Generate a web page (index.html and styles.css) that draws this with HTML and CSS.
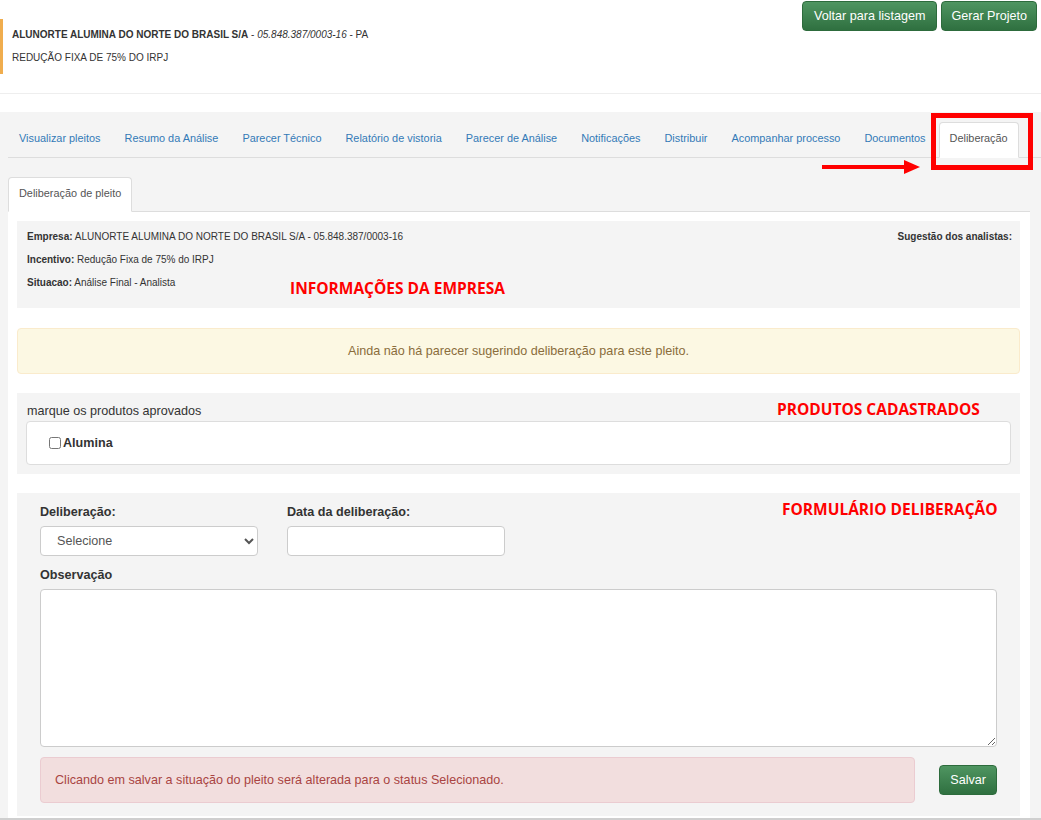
FILE: index.html
```html
<!DOCTYPE html>
<html lang="pt-BR">
<head>
    <meta charset="UTF-8">
    <meta name="viewport" content="width=device-width, initial-scale=1.0">
    <title>Deliberação de pleito</title>
    <link rel="stylesheet" href="styles.css">
</head>
<body>
    <div class="top">
        <div class="pleito-info">
            <p><b>ALUNORTE ALUMINA DO NORTE DO BRASIL S/A</b> - <i>05.848.387/0003-16</i> - PA</p>
            <p>REDUÇÃO FIXA DE 75% DO IRPJ</p>
        </div>
        <div class="actions">
            <button class="btn-green btn-back" type="button">Voltar para listagem</button>
            <button class="btn-green btn-project" type="button">Gerar Projeto</button>
        </div>
    </div>

    <div class="workspace">
        <ul class="nav main-nav">
            <li><a href="#">Visualizar pleitos</a></li>
            <li><a href="#">Resumo da Análise</a></li>
            <li><a href="#">Parecer Técnico</a></li>
            <li><a href="#">Relatório de vistoria</a></li>
            <li><a href="#">Parecer de Análise</a></li>
            <li><a href="#">Notificações</a></li>
            <li><a href="#">Distribuir</a></li>
            <li><a href="#">Acompanhar processo</a></li>
            <li><a href="#">Documentos</a></li>
            <li class="active"><a href="#">Deliberação</a></li>
        </ul>

        <!-- marcação vermelha da captura -->
        <div class="mark-box"></div>
        <div class="mark-arrow"><span class="shaft"></span><span class="head"></span></div>

        <div class="tab-content">
            <ul class="nav sub-nav">
                <li class="active"><a href="#">Deliberação de pleito</a></li>
            </ul>

            <div class="pane">
                <div class="box info-box">
                    <div class="info-cols">
                        <div>
                            <p><b>Empresa:</b> ALUNORTE ALUMINA DO NORTE DO BRASIL S/A - 05.848.387/0003-16</p>
                            <p><b>Incentivo:</b> Redução Fixa de 75% do IRPJ</p>
                            <p><b>Situacao:</b> Análise Final - Analista</p>
                        </div>
                        <p><b>Sugestão dos analistas:</b></p>
                    </div>
                    <span class="note note-info">INFORMAÇÕES DA EMPRESA</span>
                </div>

                <div class="alert alert-warning">Ainda não há parecer sugerindo deliberação para este pleito.</div>

                <div class="box products-box">
                    <p class="products-label">marque os produtos aprovados</p>
                    <div class="products-list">
                        <label class="check"><input type="checkbox"> Alumina</label>
                    </div>
                    <span class="note note-products">PRODUTOS CADASTRADOS</span>
                </div>

                <form class="box form-box">
                    <div class="form-row">
                        <div class="form-group">
                            <label class="form-label" for="deliberacao">Deliberação:</label>
                            <select class="form-input" id="deliberacao">
                                <option>Selecione</option>
                            </select>
                        </div>
                        <div class="form-group">
                            <label class="form-label" for="data">Data da deliberação:</label>
                            <input class="form-input" type="text" id="data">
                        </div>
                    </div>
                    <label class="form-label obs-label" for="obs">Observação</label>
                    <textarea class="form-input obs" id="obs"></textarea>
                    <div class="submit-row">
                        <div class="alert alert-danger">Clicando em salvar a situação do pleito será alterada para o status Selecionado.</div>
                        <button class="btn-green btn-save" type="submit">Salvar</button>
                    </div>
                    <span class="note note-form">FORMULÁRIO DELIBERAÇÃO</span>
                </form>
            </div>
        </div>
    </div>
</body>
</html>
```

FILE: styles.css
```css
* {
    box-sizing: border-box;
}

body {
    margin: 0;
    background-color: #fff;
    font-family: "Liberation Sans", Arial, sans-serif;
    font-size: 12.6px;
    color: #333;
}

p {
    margin: 0;
}

.top {
    display: flex;
    justify-content: space-between;
    align-items: flex-start;
    height: 94px;
    border-bottom: 1px solid #eee;
}

.pleito-info {
    margin-top: 19px;
    height: 55px;
    padding: 9px 0 0 9px;
    border-left: 3px solid #f0ad4e;
    font-size: 10px;
    line-height: 14px;
}

.pleito-info p {
    margin-bottom: 9px;
}

.actions {
    display: flex;
    gap: 4px;
    padding: 1px 4px 0 0;
}

.btn-green {
    padding: 5px 10px;
    border: 1px solid #2d6b3c;
    border-radius: 4px;
    background: linear-gradient(#4f9561, #2f7040);
    color: #fff;
    font-family: "Liberation Sans", Arial, sans-serif;
    font-size: 12.6px;
    line-height: 18px;
    cursor: pointer;
}

.btn-back {
    padding: 5px 11px;
}

.btn-project {
    padding: 5px 9px;
}

.workspace {
    position: relative;
    margin-top: 18px;
    padding: 10px 11px 0 8px;
    background-color: #f4f4f4;
    border-bottom: 2px solid #cfcfcf;
}

.nav {
    display: flex;
    margin: 0;
    padding: 0;
    list-style: none;
    border-bottom: 1px solid #ddd;
    font-size: 10.9px;
}

.main-nav {
    margin-right: -11px;
}

.nav a {
    display: block;
    margin: 0 2px -1px 0;
    padding: 8px 10px 12px;
    border: 1px solid transparent;
    border-radius: 4px 4px 0 0;
    color: #337ab7;
    line-height: 14px;
    text-decoration: none;
}

.nav .active a {
    background-color: #fff;
    border-color: #ddd;
    border-bottom-color: transparent;
    color: #555;
}

.sub-nav {
    margin-top: 19px;
}

.sub-nav a {
    padding-bottom: 11px;
}

.mark-box {
    position: absolute;
    left: 931px;
    top: 1px;
    width: 102px;
    height: 57px;
    border: 5px solid #f00;
}

.mark-arrow {
    position: absolute;
    left: 822px;
    top: 48px;
    display: flex;
    align-items: center;
}

.mark-arrow .shaft {
    width: 82px;
    height: 4px;
    background-color: #f00;
}

.mark-arrow .head {
    width: 0;
    height: 0;
    border-top: 7px solid transparent;
    border-bottom: 7px solid transparent;
    border-left: 16px solid #f00;
}

.pane {
    padding: 9px 10px 2px 9px;
    background-color: #fff;
}

.box {
    position: relative;
    background-color: #f4f4f4;
}

.info-box {
    height: 87px;
    padding: 9px 8px 0 10px;
    font-size: 10px;
    line-height: 14px;
}

.info-cols {
    display: flex;
    justify-content: space-between;
}

.info-cols p {
    margin-bottom: 9px;
}

.note {
    position: absolute;
    font-family: "Open Sans", "Noto Sans", sans-serif;
    font-size: 15.5px;
    font-weight: 700;
    line-height: 20px;
    color: #f00;
}

.note-info {
    left: 273px;
    top: 57px;
}

.note-products {
    left: 760px;
    top: 6px;
}

.note-form {
    left: 765px;
    top: 6px;
}

.alert {
    padding: 15px 14px;
    border: 1px solid transparent;
    border-radius: 4px;
    line-height: 14px;
}

.alert-warning {
    margin-top: 20px;
    background-color: #fcf8e3;
    border-color: #faebcc;
    color: #8a6d3b;
    text-align: center;
}

.alert-danger {
    width: 875px;
    height: 46px;
    background-color: #f2dede;
    border-color: #ebccd1;
    color: #a94442;
}

.products-box {
    margin-top: 19px;
    height: 81px;
    padding: 9px 9px 0 10px;
}

.products-label {
    line-height: 19px;
}

.products-list {
    display: flex;
    align-items: center;
    height: 44px;
    margin-left: -1px;
    padding: 0 22px;
    background-color: #fff;
    border: 1px solid #ddd;
    border-radius: 4px;
}

.check {
    display: flex;
    align-items: center;
    font-weight: bold;
}

.check input {
    width: 12px;
    height: 12px;
    margin: 0 2px 0 0;
}

.form-box {
    margin: 19px 0 0;
    padding: 10px 23px 13px;
}

.form-row {
    display: flex;
    gap: 29px;
}

.form-group {
    width: 218px;
}

.form-label {
    display: block;
    margin-bottom: 4px;
    font-weight: bold;
    line-height: 18px;
}

.form-row .form-label {
    margin-bottom: 5px;
}

.form-input {
    display: block;
    width: 100%;
    height: 30px;
    padding: 5px 12px;
    background-color: #fff;
    border: 1px solid #ccc;
    border-radius: 4px;
    font-family: "Liberation Sans", Arial, sans-serif;
    font-size: 12.6px;
    color: #555;
}

.obs-label {
    margin-top: 10px;
    margin-bottom: 5px;
}

.obs {
    height: 158px;
    resize: vertical;
}

.submit-row {
    display: flex;
    justify-content: space-between;
    align-items: center;
    margin-top: 10px;
}

.btn-save {
    padding: 5px 10px;
}
```
